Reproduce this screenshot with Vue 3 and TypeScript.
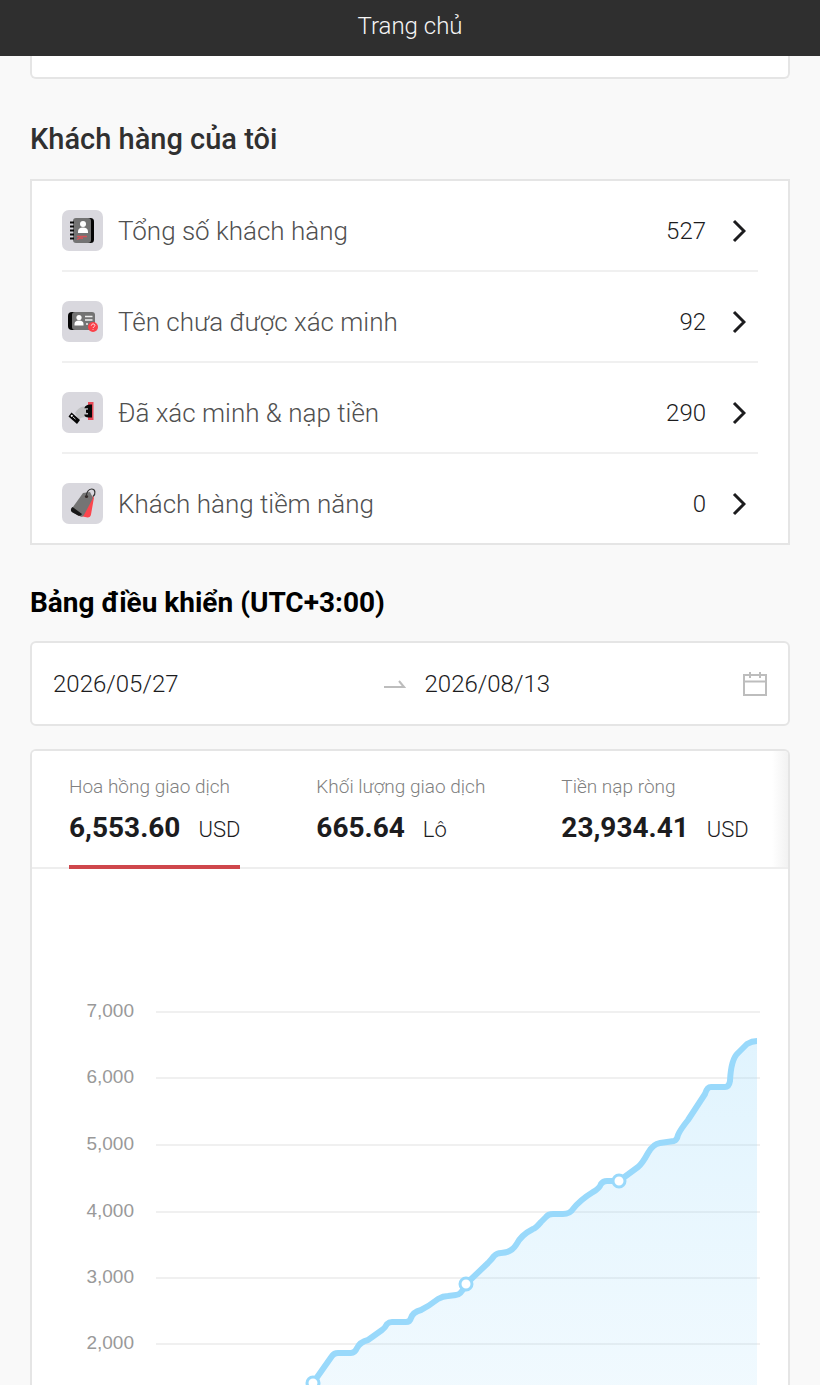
<script setup lang="ts">
import { ref } from 'vue'

interface ClientRow {
  id: string
  label: string
  count: number
}

interface Metric {
  id: string
  label: string
  value: string
  unit: string
}

const clientRows: ClientRow[] = [
  { id: 'total', label: 'Tổng số khách hàng', count: 527 },
  { id: 'unverified', label: 'Tên chưa được xác minh', count: 92 },
  { id: 'funded', label: 'Đã xác minh & nạp tiền', count: 290 },
  { id: 'leads', label: 'Khách hàng tiềm năng', count: 0 },
]

const metrics: Metric[] = [
  { id: 'commission', label: 'Hoa hồng giao dịch', value: '6,553.60', unit: 'USD' },
  { id: 'volume', label: 'Khối lượng giao dịch', value: '665.64', unit: 'Lô' },
  { id: 'deposit', label: 'Tiền nạp ròng', value: '23,934.41', unit: 'USD' },
]

const activeMetric = ref('commission')
const startDate = ref('2026/05/27')
const endDate = ref('2026/08/13')

const ticks = [
  { label: '7,000', y: 143 },
  { label: '6,000', y: 209 },
  { label: '5,000', y: 276 },
  { label: '4,000', y: 343 },
  { label: '3,000', y: 409 },
  { label: '2,000', y: 475 },
]

const markers = [
  { x: 281, y: 514 },
  { x: 434, y: 415 },
  { x: 587, y: 312 },
]

const curve =
  'M281 514 L300 487 Q302 484 306 484 H319 Q323 484 325 479 Q328 473 336 471 L350 461 Q353 459 355 455 Q357 453 360 453 H374 Q378 453 379 449 Q381 443 389 441 Q397 437 406 430 Q411 427 416 427 L424 426 Q429 426 434 415 ' +
  'L456 394 Q460 390 462 387 Q465 384 469 384 Q479 384 484 376 Q489 366 501 360 Q504 359 509 353 L514 348 Q516 345 521 345 H531 Q538 345 541 340 Q548 331 561 323 Q567 320 569 315 Q571 312 575 312 H587 ' +
  'L606 298 Q610 295 616 284 Q621 275 628 274 L642 272 Q645 271 646 266 Q648 261 656 251 L673 225 Q675 218 679 218 H693 Q697 218 698 212 Q699 190 706 184 L715 175 Q720 172 725 172'
</script>

<template>
  <div class="page">
    <header class="topbar"><h1>Trang chủ</h1></header>

    <main>
      <div class="card summary-end"></div>

      <h2 class="clients-title">Khách hàng của tôi</h2>
      <nav class="card clients" aria-label="Khách hàng của tôi">
        <a v-for="row in clientRows" :key="row.id" class="client" :href="'#' + row.id">
          <span class="badge">
            <svg v-if="row.id === 'total'" viewBox="0 0 41 41" aria-hidden="true">
              <rect x="15" y="8" width="17" height="25" rx="3.5" fill="#050505" />
              <rect x="11" y="8" width="18" height="25" rx="3" fill="#737373" />
              <path d="M8 12.5h4M8 16.5h4M8 20.5h4M8 24.5h4M8 28.5h4" stroke="#080808" stroke-width="1.8" />
              <circle cx="21" cy="14" r="3" fill="#fff" />
              <path d="M16 23v-1.5c0-2.5 2-4 5-4s5 1.500 5 4V23z" fill="#fff" />
              <path d="M15 26.500h10M15 29.500l3-1.500 3 .3" fill="none" stroke="#d65257" stroke-width="1.300" />
            </svg>
            <svg v-else-if="row.id === 'unverified'" viewBox="0 0 41 41" aria-hidden="true">
              <rect x="6" y="11" width="22" height="18" rx="4" fill="#050505" />
              <rect x="10" y="11" width="23" height="18" rx="3" fill="#737373" />
              <circle cx="17" cy="16.500" r="2.600" fill="#fff" />
              <path d="M12.500 24.500V23c0-2 1.500-3.500 4.500-3.500s4.500 1.500 4.500 3.500v1.500z" fill="#fff" />
              <path d="M23 15.500h7.500M23 19h7.500M24 23h2" stroke="#eee" stroke-width="1.500" />
              <circle cx="31" cy="26" r="5" fill="#fb4048" />
              <path d="M29.300 24.700c0-2.400 3.700-2.200 3.600-.2 0 1.300-1.800 1.200-1.800 2.500M31 28.300v.7" fill="none" stroke="#ffd9da" stroke-width="1" />
            </svg>
            <svg v-else-if="row.id === 'funded'" viewBox="0 0 41 41" aria-hidden="true">
              <path d="M26 10h5.500v18H26z" fill="#e84b58" />
              <path d="M13 21c2-3 4-5.500 8-6.500l4 .5v9c-3 2-5 .5-8 3.500z" fill="#bfc0c2" />
              <path d="M30 12.500v13h-3.500c-2.500 0-4.200-1-4.200-3h3.200c.8 0 .8-1.500 0-1.500l-1.500-.2v-3l1.500-.2c.8 0 .8-1.400 0-1.400h-3.200c.8-2.500 3-3.700 5.700-3.700z" fill="#080808" />
              <path d="M9.500 20.500L18 28l-3 4-8.500-7.500z" fill="#050505" />
              <circle cx="9.800" cy="23.800" r="1.100" fill="#fff" />
              <path d="M11 25l2.500 2.200" stroke="#fff" stroke-width=".8" />
            </svg>
            <svg v-else viewBox="0 0 41 41" aria-hidden="true">
              <path d="M26 10.500l6 4-3 17c-.3 2-1.500 3-3.500 3L16 32.500z" fill="#fb454d" />
              <path d="M21 10l7-1 3 6-9 17c-.8 1.500-2 2-3.500 1.400l-8-4C9 28.600 8.800 27.500 9.500 26z" fill="#747474" />
              <path d="M10.500 24L20 31c-.8 1.500-2 2.200-4 1.500l-6-3.500c-1.500-1-1.300-2.500-.5-4z" fill="#171717" />
              <circle cx="24.500" cy="13.500" r="1.600" fill="#332827" />
              <path d="M24.500 13.500c-.3-4 2-7.500 5-7.500 4 0 4.500 5 1.500 7.500" fill="none" stroke="#333" stroke-width="1.200" />
            </svg>
          </span>
          <span class="client-label">{{ row.label }}</span>
          <span class="client-count">{{ row.count }}</span>
          <svg class="chevron" viewBox="0 0 14 24" aria-hidden="true">
            <path d="M2 2l10 10L2 22" />
          </svg>
        </a>
      </nav>

      <h2 class="board-title">Bảng điều khiển (UTC+3:00)</h2>
      <div class="card dates">
        <input v-model="startDate" type="text" aria-label="Ngày bắt đầu" />
        <svg class="arrow" viewBox="0 0 22 12" aria-hidden="true">
          <path d="M0 9h20l-5-6" />
        </svg>
        <input v-model="endDate" type="text" aria-label="Ngày kết thúc" />
        <svg class="calendar" viewBox="0 0 24 24" aria-hidden="true">
          <path d="M1 3h22v20H1zM1 9.500h22M7 0v6M17 0v6" />
        </svg>
      </div>

      <section class="card board">
        <div class="tabs" role="tablist">
          <button
            v-for="metric in metrics"
            :key="metric.id"
            type="button"
            role="tab"
            class="tab"
            :class="{ active: activeMetric === metric.id }"
            :aria-selected="activeMetric === metric.id"
            @click="activeMetric = metric.id"
          >
            <span class="tab-label">{{ metric.label }}</span>
            <span class="tab-figure"><strong>{{ metric.value }}</strong><span>{{ metric.unit }}</span></span>
          </button>
        </div>

        <svg class="chart" viewBox="0 0 756 517" role="img" aria-label="Hoa hồng giao dịch">
          <defs>
            <linearGradient id="fill" x1="0" y1="172" x2="0" y2="606" gradientUnits="userSpaceOnUse">
              <stop offset="0" stop-color="#99d9fb" stop-opacity="0.300" />
              <stop offset="1" stop-color="#99d9fb" stop-opacity="0.100" />
            </linearGradient>
          </defs>
          <g v-for="tick in ticks" :key="tick.label">
            <line class="grid" x1="124" :y1="tick.y" x2="728" :y2="tick.y" />
            <text class="tick" x="102" :y="tick.y + 5">{{ tick.label }}</text>
          </g>
          <path :d="curve + ' V517 H281 Z'" fill="url(#fill)" />
          <path class="line" :d="curve" />
          <circle v-for="m in markers" :key="m.x" class="marker" :cx="m.x" :cy="m.y" r="6" />
        </svg>
      </section>
    </main>
  </div>
</template>

<style>
body {
  background: #f9f9f9;
}
</style>

<style scoped>
* {
  box-sizing: border-box;
}
.page {
  font-family: Roboto, "Noto Sans", sans-serif;
  color: #1c1c1e;
  background: #f9f9f9;
}
.topbar {
  display: flex;
  align-items: center;
  justify-content: center;
  height: 56px;
  padding-bottom: 4px;
  background: #2f2f2f;
  color: #f5f5f5;
}
h1 {
  margin: 0;
  font-size: 24px;
  font-weight: 300;
  line-height: 32px;
}
main {
  padding: 0 30px;
}
.card {
  background: #fff;
  border: 2px solid #e5e5e5;
  border-radius: 6px;
}
.summary-end {
  height: 23px;
  border-top: 0;
  border-radius: 0 0 6px 6px;
}
h2 {
  margin: 0;
  line-height: 40px;
}
.clients-title {
  margin: 40px 0 20px;
  font-size: 29px;
  font-weight: 500;
  color: #303030;
}
.clients {
  padding: 0 30px;
  border-radius: 0;
}
.client {
  display: flex;
  align-items: center;
  padding: 29px 0 19px;
  border-bottom: 2px solid #f0f0f0;
  color: inherit;
  text-decoration: none;
}
.client:last-child {
  border-bottom: 0;
}
.badge {
  width: 41px;
  height: 41px;
  margin-right: 15px;
  border-radius: 7px;
  background: #d9d8de;
}
.badge svg {
  display: block;
  width: 100%;
}
.client-label {
  flex: 1;
  font-size: 26px;
  font-weight: 300;
  line-height: 40px;
  color: #505050;
}
.client-count {
  font-size: 24px;
  font-weight: 300;
  line-height: 40px;
}
.chevron {
  width: 14px;
  height: 24px;
  margin: 0 12px 0 26px;
  fill: none;
  stroke: #1c1c1e;
  stroke-width: 3;
}
.board-title {
  margin: 38px 0 18px;
  font-size: 28px;
  font-weight: 700;
  color: #000;
}
.dates {
  display: flex;
  align-items: center;
  height: 85px;
  padding: 0 21px;
}
.dates input {
  flex: 1;
  min-width: 0;
  padding: 0;
  border: 0;
  outline: 0;
  background: none;
  color: #1c1c1e;
  font: 300 24px/40px Roboto, sans-serif;
}
.arrow {
  width: 22px;
  height: 12px;
  margin: 0 19px 0 12px;
  fill: none;
  stroke: #bdbdbd;
  stroke-width: 2;
}
.calendar {
  width: 24px;
  height: 24px;
  fill: none;
  stroke: #bdbdbd;
  stroke-width: 2;
}
.board {
  margin-top: 23px;
  border-bottom: 0;
  border-radius: 6px 6px 0 0;
  overflow: hidden;
}
.tabs {
  display: flex;
  gap: 76px;
  height: 118px;
  padding: 0 37px;
  background: linear-gradient(to left, #f2f2f2, #fff 16px);
  box-shadow: inset 0 -2px #eee;
}
.tab {
  display: flex;
  flex-direction: column;
  align-items: flex-start;
  padding: 24px 0 0;
  border: 0;
  border-bottom: 4px solid transparent;
  background: none;
  color: inherit;
  font-family: inherit;
  white-space: nowrap;
}
.tab.active {
  border-bottom-color: #cf474c;
}
.tab-label {
  font-size: 19px;
  font-weight: 300;
  line-height: 24px;
  color: #808080;
}
.tab-figure {
  display: flex;
  align-items: baseline;
  gap: 18px;
  margin-top: 9px;
  font-size: 22px;
  font-weight: 300;
  line-height: 40px;
}
.tab-figure strong {
  font-size: 28px;
  font-weight: 700;
}
.chart {
  display: block;
  width: 100%;
}
.grid {
  stroke: #f0f0f0;
  stroke-width: 2;
}
.tick {
  fill: #999;
  font: 19px "Liberation Sans", sans-serif;
  text-anchor: end;
}
.line {
  fill: none;
  stroke: #99d9fb;
  stroke-width: 6;
  stroke-linejoin: round;
}
.marker {
  fill: #fff;
  stroke: #99d9fb;
  stroke-width: 3;
}
</style>
